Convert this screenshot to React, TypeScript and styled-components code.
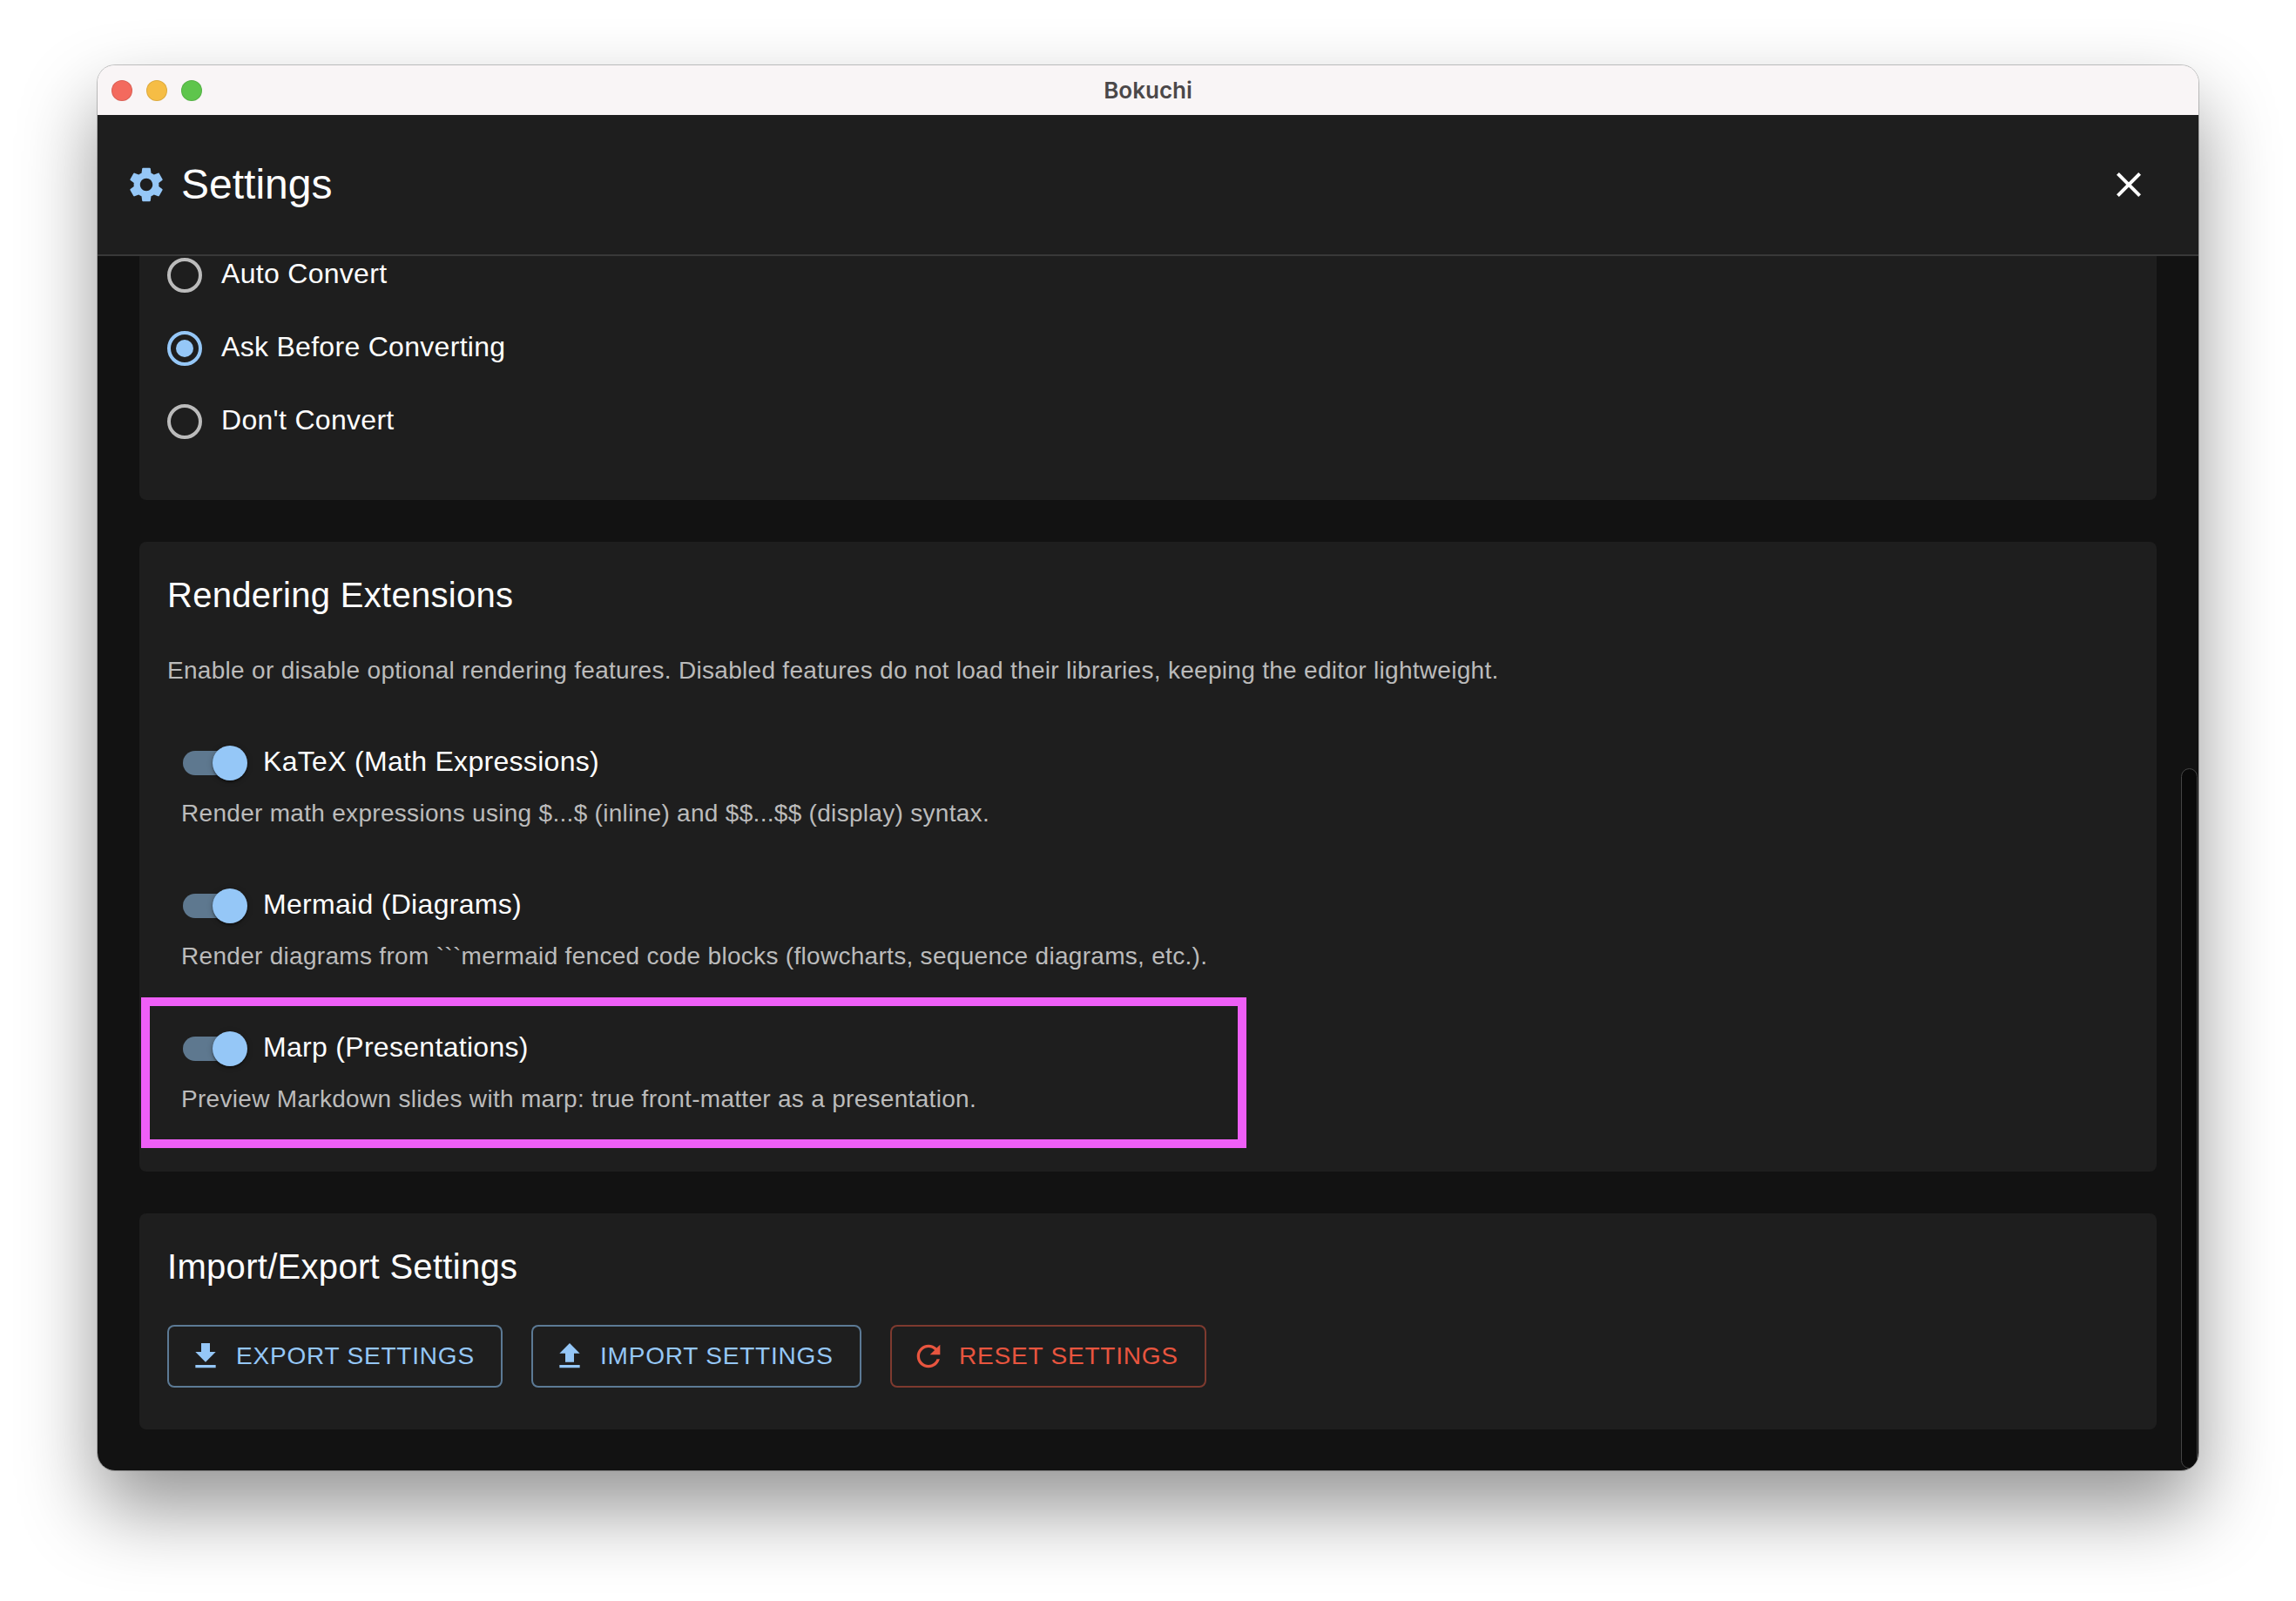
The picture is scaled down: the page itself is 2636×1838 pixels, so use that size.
import { createGlobalStyle, styled } from "styled-components";

const GlobalStyle = createGlobalStyle`
  html, body {
    margin: 0;
    background: #ffffff;
    font-family: "Liberation Sans", Arial, sans-serif;
  }
  * {
    box-sizing: border-box;
  }
`;

const Desktop = styled.div`
  width: 2636px;
  height: 1838px;
  padding: 75px 112px 150px;
  overflow: hidden;
`;

const Window = styled.div`
  position: relative;
  height: 1613px;
  display: flex;
  flex-direction: column;
  border-radius: 20px;
  overflow: hidden;
  box-shadow: 0 0 0 1px rgba(0, 0, 0, 0.22);
`;

const WindowShadow = styled.div`
  border-radius: 20px;
  box-shadow: 0 44px 88px rgba(0, 0, 0, 0.42);
`;

const TitleBar = styled.div`
  position: relative;
  flex: 0 0 57px;
  display: flex;
  align-items: center;
  justify-content: center;
  background: #f9f5f6;
`;

const Lights = styled.div`
  position: absolute;
  left: 16px;
  top: 17px;
  display: flex;
  gap: 16px;
`;

const Light = styled.span<{ $color: string }>`
  width: 24px;
  height: 24px;
  border-radius: 50%;
  background: ${(p) => p.$color};
  box-shadow: inset 0 0 0 1px rgba(0, 0, 0, 0.1);
`;

const WindowTitle = styled.span`
  font-family: Inter, "Liberation Sans", sans-serif;
  font-size: 26px;
  font-weight: 600;
  color: #4b4849;
`;

const Header = styled.header`
  flex: 0 0 162px;
  display: flex;
  align-items: center;
  padding: 0 56px 0 32px;
  background: #1e1e1e;
  border-bottom: 2px solid #383838;
`;

const HeaderIcon = styled.svg`
  width: 48px;
  height: 48px;
  margin-right: 16px;
  fill: #95c7f7;
`;

const HeaderTitle = styled.h2`
  flex: 1;
  margin: 0;
  font-size: 48px;
  font-weight: 400;
  line-height: 64px;
  color: #ffffff;
`;

const CloseIcon = styled.svg`
  width: 48px;
  height: 48px;
  fill: #ffffff;
`;

const Content = styled.main`
  flex: 1;
  min-height: 0;
  display: flex;
  flex-direction: column;
  gap: 48px;
  padding: 0 48px;
  overflow: hidden;
  background: #121212;
`;

const Panel = styled.section`
  padding: 32px;
  border-radius: 8px;
  background: #1e1e1e;
`;

const RadioPanel = styled(Panel)`
  padding: 0 32px 48px;
  border-radius: 0 0 8px 8px;
  overflow: hidden;
`;

const RadioList = styled.div`
  margin-top: -20px;
  display: flex;
  flex-direction: column;
`;

const RadioRow = styled.label`
  height: 84px;
  display: flex;
  align-items: center;
  gap: 22px;
  font-size: 32px;
  letter-spacing: 0.3px;
  color: #ffffff;
`;

const RadioLabel = styled.span`
  padding-bottom: 3px;
`;

const RadioRing = styled.span<{ $checked?: boolean }>`
  width: 40px;
  height: 40px;
  display: flex;
  align-items: center;
  justify-content: center;
  border-radius: 50%;
  border: 4px solid ${(p) => (p.$checked ? "#95c7f7" : "#bbbbbb")};

  &::after {
    content: "";
    width: 20px;
    height: 20px;
    border-radius: 50%;
    background: ${(p) => (p.$checked ? "#95c7f7" : "transparent")};
  }
`;

const SectionTitle = styled.h3`
  height: 64px;
  margin: 0;
  font-size: 40px;
  font-weight: 400;
  line-height: 59px;
  letter-spacing: 0.3px;
  color: #ffffff;
`;

const SectionText = styled.p`
  margin: 32px 0 0;
  font-size: 28px;
  line-height: 40px;
  letter-spacing: 0.3px;
  color: #bbbbbb;
`;

const ExtensionList = styled.div`
  display: flex;
  flex-direction: column;
  gap: 48px;
  padding: 48px 0 31px 16px;
`;

const Extension = styled.div`
  position: relative;
`;

const ExtensionHead = styled.label`
  display: flex;
  align-items: center;
  margin-left: -22px;
  font-size: 32px;
  letter-spacing: 0.3px;
  color: #ffffff;
`;

const ExtensionLabel = styled.span`
  padding-bottom: 3px;
`;

const ExtensionText = styled.p`
  margin: 0;
  font-size: 28px;
  line-height: 40px;
  letter-spacing: 0.3px;
  color: #bbbbbb;
`;

const Switch = styled.span`
  position: relative;
  flex: 0 0 116px;
  height: 76px;
`;

const SwitchTrack = styled.span`
  position: absolute;
  left: 24px;
  top: 24px;
  width: 68px;
  height: 28px;
  border-radius: 14px;
  background: #5e788f;
`;

const SwitchThumb = styled.span`
  position: absolute;
  left: 58px;
  top: 18px;
  width: 40px;
  height: 40px;
  border-radius: 50%;
  background: #95c7f7;
  box-shadow: 0 2px 2px rgba(0, 0, 0, 0.35), 0 1px 6px rgba(0, 0, 0, 0.25);
`;

const Highlight = styled.div`
  position: absolute;
  left: -46px;
  top: -21px;
  width: 1269px;
  height: 173px;
  border: 10px solid #ef5ff7;
  pointer-events: none;
`;

const ButtonRow = styled.div`
  display: flex;
  gap: 33px;
  margin: 32px 0 16px;
`;

const OutlineButton = styled.button<{ $danger?: boolean; $width: number }>`
  width: ${(p) => p.$width}px;
  height: 72px;
  display: flex;
  align-items: center;
  gap: 15px;
  padding: 0 0 0 22px;
  background: transparent;
  border-radius: 8px;
  border: 2px solid ${(p) => (p.$danger ? "#7e3a2f" : "#5c7a95")};
  color: ${(p) => (p.$danger ? "#e8553f" : "#95c7f7")};
  font-family: inherit;
  font-size: 28px;
  letter-spacing: 0.8px;
  text-transform: uppercase;
`;

const ButtonIcon = styled.svg`
  flex: 0 0 40px;
  width: 40px;
  height: 40px;
  fill: currentColor;
`;

const Scrollbar = styled.div`
  position: absolute;
  right: 1px;
  top: 807px;
  bottom: 2px;
  width: 19px;
  background: #0a0a0a;
  border: 1px solid #444444;
  border-radius: 10px;
`;

const extensions = [
  {
    title: "KaTeX (Math Expressions)",
    text: "Render math expressions using $...$ (inline) and $$...$$ (display) syntax.",
  },
  {
    title: "Mermaid (Diagrams)",
    text: "Render diagrams from ```mermaid fenced code blocks (flowcharts, sequence diagrams, etc.).",
  },
  {
    title: "Marp (Presentations)",
    text: "Preview Markdown slides with marp: true front-matter as a presentation.",
    highlighted: true,
  },
];

export default function App() {
  return (
    <Desktop>
      <GlobalStyle />
      <WindowShadow>
        <Window>
          <TitleBar>
            <Lights>
              <Light $color="#f36a5e" />
              <Light $color="#f6bd45" />
              <Light $color="#5ec54c" />
            </Lights>
            <WindowTitle>Bokuchi</WindowTitle>
          </TitleBar>

          <Header>
            <HeaderIcon viewBox="0 0 24 24">
              <path d="M19.14 12.94c.04-.3.06-.61.06-.94 0-.32-.02-.64-.07-.94l2.03-1.58c.18-.14.23-.41.12-.61l-1.92-3.32c-.12-.22-.37-.29-.59-.22l-2.39.96c-.5-.38-1.03-.7-1.62-.94l-.36-2.54c-.04-.24-.24-.41-.48-.41h-3.84c-.24 0-.43.17-.47.41l-.36 2.54c-.59.24-1.13.57-1.62.94l-2.39-.96c-.22-.08-.47 0-.59.22L2.74 8.87c-.12.21-.08.47.12.61l2.03 1.58c-.05.3-.09.63-.09.94s.02.64.07.94l-2.03 1.58c-.18.14-.23.41-.12.61l1.92 3.32c.12.22.37.29.59.22l2.39-.96c.5.38 1.03.7 1.62.94l.36 2.54c.05.24.24.41.48.41h3.84c.24 0 .44-.17.47-.41l.36-2.54c.59-.24 1.13-.56 1.62-.94l2.39.96c.22.08.47 0 .59-.22l1.92-3.32c.12-.22.07-.47-.12-.61l-2.01-1.58zM12 15.6c-1.98 0-3.6-1.62-3.6-3.6s1.62-3.6 3.6-3.6 3.6 1.62 3.6 3.6-1.62 3.6-3.6 3.6z" />
            </HeaderIcon>
            <HeaderTitle>Settings</HeaderTitle>
            <CloseIcon viewBox="0 0 24 24">
              <path d="M19 6.41 17.59 5 12 10.59 6.41 5 5 6.41 10.59 12 5 17.59 6.41 19 12 13.41 17.59 19 19 17.59 13.41 12z" />
            </CloseIcon>
          </Header>

          <Content>
            <RadioPanel>
              <RadioList>
                <RadioRow>
                  <RadioRing />
                  <RadioLabel>Auto Convert</RadioLabel>
                </RadioRow>
                <RadioRow>
                  <RadioRing $checked />
                  <RadioLabel>Ask Before Converting</RadioLabel>
                </RadioRow>
                <RadioRow>
                  <RadioRing />
                  <RadioLabel>Don't Convert</RadioLabel>
                </RadioRow>
              </RadioList>
            </RadioPanel>

            <Panel>
              <SectionTitle>Rendering Extensions</SectionTitle>
              <SectionText>
                Enable or disable optional rendering features. Disabled features do not load their libraries, keeping the editor lightweight.
              </SectionText>
              <ExtensionList>
                {extensions.map((ext) => (
                  <Extension key={ext.title}>
                    <ExtensionHead>
                      <Switch>
                        <SwitchTrack />
                        <SwitchThumb />
                      </Switch>
                      <ExtensionLabel>{ext.title}</ExtensionLabel>
                    </ExtensionHead>
                    <ExtensionText>{ext.text}</ExtensionText>
                    {ext.highlighted && <Highlight />}
                  </Extension>
                ))}
              </ExtensionList>
            </Panel>

            <Panel>
              <SectionTitle>Import/Export Settings</SectionTitle>
              <ButtonRow>
                <OutlineButton $width={385}>
                  <ButtonIcon viewBox="0 0 24 24">
                    <path d="M5 20h14v-2H5v2zM19 9h-4V3H9v6H5l7 7 7-7z" />
                  </ButtonIcon>
                  Export Settings
                </OutlineButton>
                <OutlineButton $width={379}>
                  <ButtonIcon viewBox="0 0 24 24">
                    <path d="M9 16h6v-6h4l-7-7-7 7h4v6zm-4 2h14v2H5v-2z" />
                  </ButtonIcon>
                  Import Settings
                </OutlineButton>
                <OutlineButton $danger $width={363}>
                  <ButtonIcon viewBox="0 0 24 24">
                    <path d="M17.65 6.35C16.2 4.9 14.21 4 12 4c-4.42 0-7.99 3.58-7.99 8s3.57 8 7.99 8c3.73 0 6.84-2.55 7.73-6h-2.08c-.82 2.33-3.04 4-5.65 4-3.31 0-6-2.69-6-6s2.69-6 6-6c1.66 0 3.14.69 4.22 1.78L13 11h7V4l-2.35 2.35z" />
                  </ButtonIcon>
                  Reset Settings
                </OutlineButton>
              </ButtonRow>
            </Panel>
          </Content>

          <Scrollbar />
        </Window>
      </WindowShadow>
    </Desktop>
  );
}
